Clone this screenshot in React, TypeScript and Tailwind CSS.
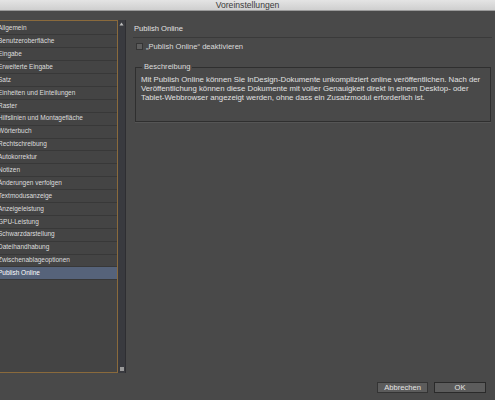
const items = [
  "Allgemein",
  "Benutzeroberfläche",
  "Eingabe",
  "Erweiterte Eingabe",
  "Satz",
  "Einheiten und Einteilungen",
  "Raster",
  "Hilfslinien und Montagefläche",
  "Wörterbuch",
  "Rechtschreibung",
  "Autokorrektur",
  "Notizen",
  "Änderungen verfolgen",
  "Textmodusanzeige",
  "Anzeigeleistung",
  "GPU-Leistung",
  "Schwarzdarstellung",
  "Dateihandhabung",
  "Zwischenablageoptionen",
  "Publish Online",
];

export default function App() {
  return (
    <div
      className="w-[495px] h-[400px] overflow-hidden bg-[#494949] flex flex-col text-[#dcdcdc]"
      style={{ fontFamily: '"Liberation Sans", Arial, sans-serif' }}
    >
      {/* title bar */}
      <div className="h-[11px] shrink-0 bg-gradient-to-b from-[#e4e4e4] to-[#cfcfcf] border-b border-[#9a9a9a] flex items-center justify-center text-[8.6px] text-[#3a3a3a] leading-none">
        Voreinstellungen
      </div>

      <div className="flex-1 flex min-h-0">
        {/* sidebar */}
        <div className="flex flex-col w-[133px] shrink-0 pt-[9px]">
          <div className="flex h-[353px]">
            <div className="-ml-[8px] w-[126px] border border-[#8a6a3c] bg-[#444444] flex flex-col pt-[1.5px]">
              {items.map((it) => (
                <div
                  key={it}
                  className={
                    "h-[12.9px] shrink-0 flex items-center pl-[5px] text-[6.5px] leading-none whitespace-nowrap border-b border-[#383838] " +
                    (it === "Publish Online"
                      ? "bg-[#56637a] text-white"
                      : "text-[#dedede]")
                  }
                >
                  {it}
                </div>
              ))}
            </div>
            <div className="w-[8px] bg-[#393a3f] border-r border-[#2e2e32] flex flex-col items-center justify-between py-[2px]">
              <svg width="5" height="4" viewBox="0 0 5 4">
                <path d="M2.5 0.5 L4.5 3.5 L0.5 3.5 Z" fill="#bdbdbd" />
              </svg>
              <div className="w-[4px] h-[4px] bg-[#9a9a9a]" />
            </div>
          </div>
        </div>

        {/* right panel */}
        <div className="flex-1 flex flex-col pt-[14px] pr-[3px] min-w-0">
          <div className="pl-[1px] text-[7.6px] leading-none text-[#e2e2e2] pb-[4px] border-b border-[#3a3a3a]">
            Publish Online
          </div>
          <div className="flex items-center gap-[3px] mt-[5px] pl-[3px] text-[7.6px] leading-none">
            <div className="w-[7px] h-[7px] bg-[#5e5e5e] border border-[#353535]" />
            <span>„Publish Online“ deaktivieren</span>
          </div>

          <div className="relative mt-[17px] ml-[2px] mr-[1px] h-[55px] border border-[#2f2f2f] shadow-[0_1px_0_#555]">
            <div className="absolute -top-[5px] left-[6px] px-[2px] bg-[#494949] text-[7.6px] leading-none text-[#dcdcdc]">
              Beschreibung
            </div>
            <p className="pt-[7px] pl-[5px] text-[7.8px] leading-[9px] text-[#e0e0e0] whitespace-nowrap">
              Mit Publish Online können Sie InDesign-Dokumente unkompliziert online veröffentlichen. Nach der
              <br />
              Veröffentlichung können diese Dokumente mit voller Genauigkeit direkt in einem Desktop- oder
              <br />
              Tablet-Webbrowser angezeigt werden, ohne dass ein Zusatzmodul erforderlich ist.
            </p>
          </div>

          <div className="flex-1" />
          <div className="flex justify-end gap-[6px] pr-[6px] pb-[7px]">
            <button className="w-[51px] h-[11px] bg-[#5c5c5c] border border-[#343434] text-[7.6px] leading-none text-[#e4e4e4]">
              Abbrechen
            </button>
            <button className="w-[52px] h-[11px] bg-[#5c5c5c] border border-[#2a2a2a] text-[7.6px] leading-none text-[#e4e4e4]">
              OK
            </button>
          </div>
        </div>
      </div>
    </div>
  );
}
